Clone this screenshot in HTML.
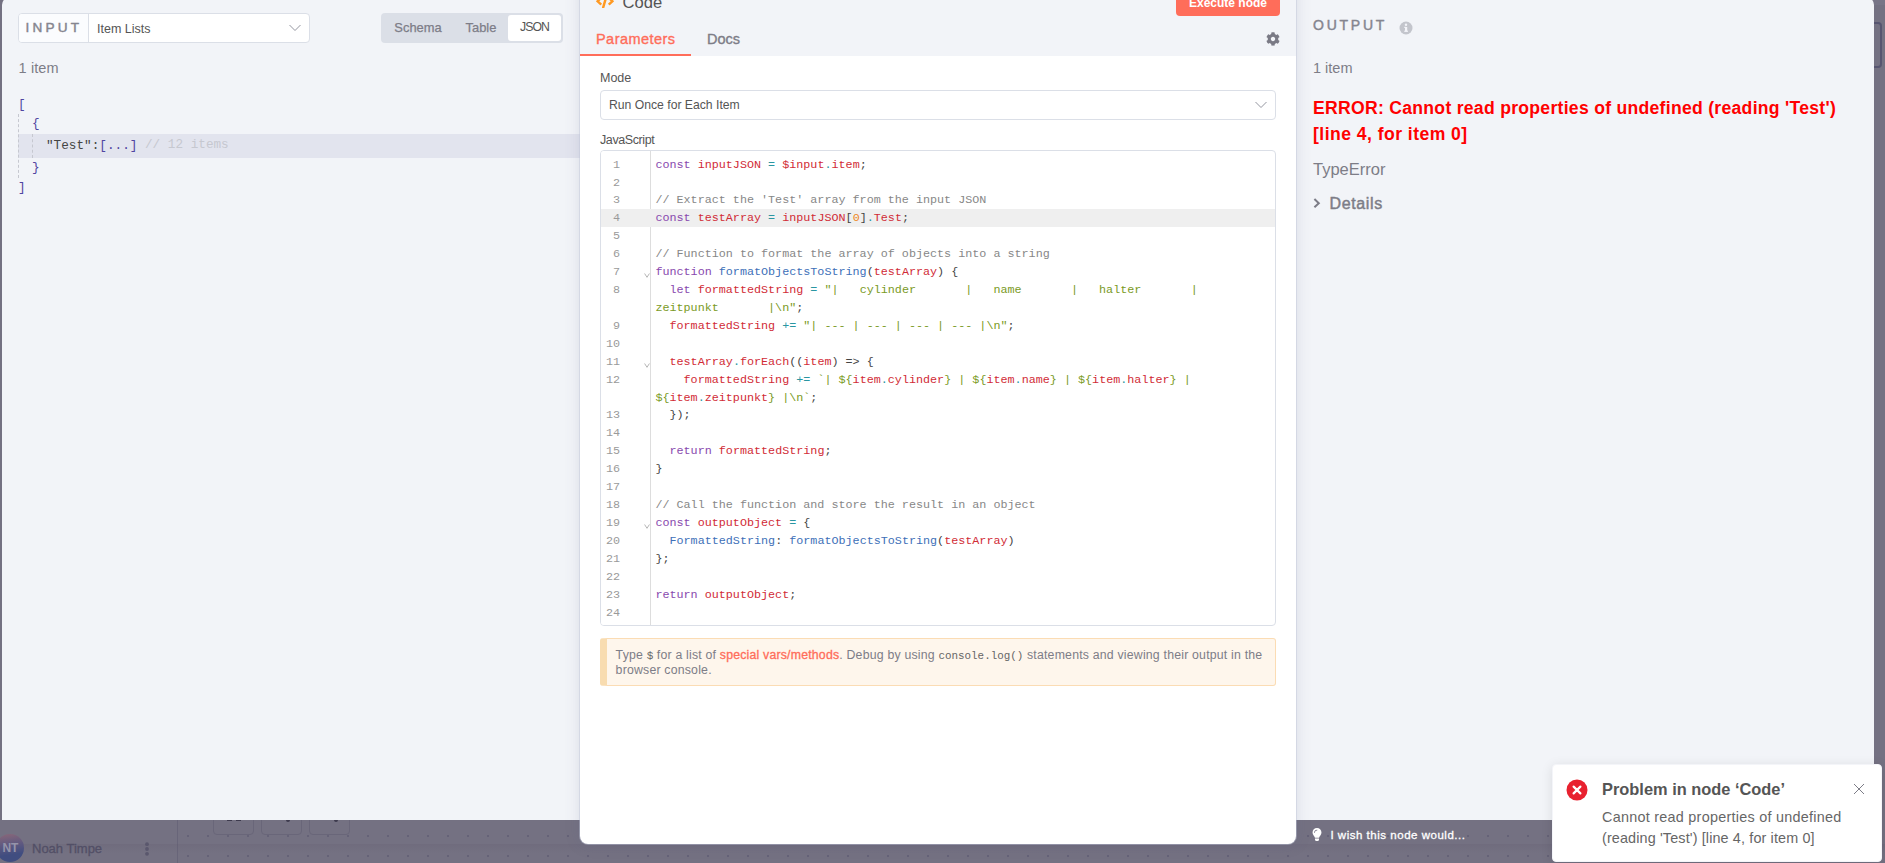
<!DOCTYPE html>
<html lang="en">
<head>
<meta charset="utf-8">
<title>n8n - Code node</title>
<style>
*{box-sizing:border-box;margin:0;padding:0}
html,body{width:1885px;height:863px;overflow:hidden}
body{position:relative;background:#747182;font-family:"Liberation Sans",sans-serif;color:#555;font-size:14px}
.abs{position:absolute}
/* canvas behind overlay */
#canvas{left:178px;top:0;width:1707px;height:863px;background-image:radial-gradient(circle,#656277 0,#656277 0.8px,rgba(101,98,119,0) 1.3px);background-size:20px 20px;background-position:0px 6px}
#sidebar{left:0;top:0;width:178px;height:863px;background:#747182;border-right:1px solid #686579}
#band{left:0;top:844px;width:1885px;height:9px;background:linear-gradient(rgba(90,80,100,.16),rgba(90,80,100,0))}
.zoombtn{top:790px;width:41px;height:44.5px;border:1px solid #696679;border-radius:4px}
/* panels */
#inpanel{left:2px;top:0;width:600px;height:820px}
#inpanel .bg{left:0;top:-3px;width:600px;height:823px;background:#f2f4f8;border-radius:8px 0 0 0}
#outpanel{left:1290px;top:0;width:584px;height:820px}
#outpanel .bg{left:0;top:-3px;width:584px;height:823px;background:#f2f4f8;border-radius:0 8px 0 0}
#main{left:580px;top:-20px;width:716px;height:864px;background:#fff;border-radius:8px;box-shadow:0 0 0 1px rgba(190,198,215,.45),0 0 16px rgba(80,90,130,.16)}
#mainhead{left:0;top:0;width:716px;height:76px;background:#f2f4f8;border-radius:8px 8px 0 0}

/* input panel */
.sel{left:16px;top:13px;width:292px;height:30px;border:1px solid #dbdfe7;border-radius:4px;background:#fff}
.sel .lbl{left:0;top:0;width:70px;height:28px;background:#fbfcfe;border-right:1px solid #dbdfe7;border-radius:3px 0 0 3px;font-weight:normal;-webkit-text-stroke:0.45px #85858f;font-size:13.6px;letter-spacing:3.2px;color:#85858f;line-height:28px;padding-left:6.5px}
.sel .val{left:78px;top:1.6px;height:28px;line-height:27px;font-size:12.5px;color:#555}
.seg{left:379px;top:13px;width:182px;height:30px;background:#dbdfe7;border-radius:4px}
.seg span{position:absolute;top:0;height:30px;line-height:29px;font-size:12.9px;color:#7d7d87;-webkit-text-stroke:0.25px #7d7d87;text-align:center}
.seg .on{top:2px;height:26px;line-height:25px;background:#fff;border-radius:3px;color:#555;-webkit-text-stroke:0;letter-spacing:-0.9px;padding-left:0;font-size:12.3px}
.cnt{font-size:14.5px;color:#7d7d87;line-height:16px}
.json{font-family:"Liberation Mono",monospace;font-size:12.7px;color:#5045a1;line-height:22px;white-space:pre}

/* main panel */
#main .title{left:42.5px;top:10.6px;font-size:16.6px;color:#555;line-height:24px}
.exec{left:596px;top:9.5px;width:104px;height:26px;background:#ff6d5a;border-radius:4px;color:#fff;font-weight:bold;font-size:12px;text-align:center;line-height:27.5px}
.tab{top:49px;height:27px;font-size:14.5px;line-height:20px;letter-spacing:0.25px}
.tab.on{letter-spacing:0.45px;color:#ff6d5a;-webkit-text-stroke:0.35px #ff6d5a;border-bottom:2px solid #ff6d5a}
.tab.off{letter-spacing:0;color:#7d7d87;-webkit-text-stroke:0.35px #7d7d87}
.plabel{font-size:12.5px;color:#555;line-height:14px}
.msel{left:20px;top:110px;width:676px;height:30px;border:1px solid #dbdfe7;border-radius:4px;background:#fff;font-size:12.2px;color:#555;line-height:28px;padding-left:8px}
.editor{left:20px;top:170px;width:676px;height:476px;border:1px solid #dbdfe7;border-radius:4px;background:#fff;overflow:hidden}
.gutter{left:0;top:0;width:50px;height:474px;border-right:1px solid #dddddd;background:#fff}
.ln{position:absolute;left:0;width:676px;height:18px;font-family:"Liberation Mono",monospace;font-size:11.74px;line-height:18px;white-space:pre;color:#444}
.ln i{position:absolute;left:5px;top:0;font-style:normal;color:#9a9a9a}
.ln b{position:absolute;left:54.4px;top:0;font-weight:normal}
.ln.act{background:#efefef}
.k{color:#8848ae}.v{color:#d12b36}.o{color:#2a96a2}.f{color:#4070b8}.s{color:#7a9a1e}.n{color:#ee8822}.c{color:#878787}
.fold{position:absolute;left:42.5px;width:6px;height:5px}
.notice{left:20px;top:658px;width:676px;height:48px;background:#fef6ec;border:1px solid #fbdcb4;border-left:7px solid #f8dcb0;border-radius:3px;font-size:12.3px;line-height:14.7px;color:#7d7d87;padding:9px 4px 0 8.6px;letter-spacing:0.2px}
.notice a{color:#ff6d5a;-webkit-text-stroke:0.3px #ff6d5a}
.notice code{font-family:"Liberation Mono",monospace;font-size:10.9px;color:#666;letter-spacing:0;line-height:10px}

/* output panel */
.otitle{left:23px;top:17px;font-size:14px;letter-spacing:2.75px;color:#85858f;-webkit-text-stroke:0.45px #85858f;line-height:16px}
.err{left:23px;top:96.2px;width:560px;font-size:17.6px;font-weight:bold;color:#ff0000;line-height:25.7px;letter-spacing:0.28px}
.terr{left:23px;top:159px;font-size:16.5px;color:#7d7d87;line-height:20px}
.det{left:39.6px;top:194.1px;font-size:16px;letter-spacing:0.62px;color:#7d7d87;-webkit-text-stroke:0.45px #7d7d87;line-height:20px}
/* toast */
#toast{left:1552px;top:764px;width:330px;height:98px;background:#fff;border-radius:4px;border:1px solid #f4f5f9;box-shadow:0 2px 12px rgba(0,0,0,.1)}
#toast .tt{left:49px;top:14px;font-size:16.4px;font-weight:bold;color:#555;line-height:20px}
#toast .tb{left:49px;top:41.6px;width:270px;font-size:14.4px;color:#666;line-height:20.9px;letter-spacing:0.26px}
/* bottom */
.wish{left:1330.4px;top:827.2px;letter-spacing:0.52px;font-size:11.5px;color:#fff;-webkit-text-stroke:0.3px #fff;line-height:16px}
.user{left:32px;top:841.2px;font-size:13px;color:#524f66;-webkit-text-stroke:0.3px #524f66;line-height:16px}
.avatar{left:-4px;top:834px;width:28px;height:28px;border-radius:50%;background:linear-gradient(172deg,#82657a 8%,#5f5980 40%,#404d80 72%);color:#9594aa;font-size:12px;font-weight:bold;line-height:28px;text-align:center;padding-left:0.6px;letter-spacing:-0.3px}
</style>
</head>
<body>
<div id="sidebar" class="abs"></div>
<div id="canvas" class="abs"></div>
<div id="band" class="abs"></div>
<div class="abs zoombtn" style="left:213px"></div>
<div class="abs zoombtn" style="left:261px"></div>
<div class="abs zoombtn" style="left:309px"></div>
<div class="abs" style="left:227px;top:819px;width:5px;height:2px;background:#3d3a4d"></div><div class="abs" style="left:236px;top:819px;width:5px;height:2px;background:#3d3a4d"></div><div class="abs" style="left:286px;top:819px;width:4px;height:2.500px;background:#3d3a4d;border-radius:0 0 2px 2px"></div><div class="abs" style="left:334px;top:819px;width:4px;height:2.500px;background:#3d3a4d;border-radius:0 0 2px 2px"></div>

<div id="inpanel" class="abs"><div class="abs bg"></div>
  <div class="abs sel">
    <div class="abs lbl">INPUT</div>
    <div class="abs val">Item Lists</div>
    <svg class="abs" style="left:269px;top:9px" width="14" height="10" viewBox="0 0 14 10"><path d="M1.5 2 L7 7.5 L12.5 2" fill="none" stroke="#9496a0" stroke-width="1"/></svg>
  </div>
  <div class="abs seg">
    <span style="left:3px;width:68px">Schema</span>
    <span style="left:73px;width:54px">Table</span>
    <span class="on" style="left:127px;width:53px">JSON</span>
  </div>
  <div class="abs cnt" style="left:16.6px;top:60px;letter-spacing:0.1px">1 item</div>
  <div class="abs" style="left:16px;top:134px;width:570px;height:24px;background:#e2e4ee"></div>
  <div class="abs" style="left:16px;top:114px;width:0;height:64px;border-left:1px dashed #c6c8d0"></div>
  <div class="abs" style="left:30px;top:134px;width:0;height:24px;border-left:1px dashed #c6c8d0"></div>
  <div class="abs json" style="left:16px;top:93.6px">[</div>
  <div class="abs json" style="left:30px;top:113.4px">{</div>
  <div class="abs json" style="left:44px;top:135.4px"><span style="color:#444">"Test":</span>[...] <span style="color:#c6c8d0;position:relative;top:-1px">// 12 items</span></div>
  <div class="abs json" style="left:30px;top:157.2px">}</div>
  <div class="abs json" style="left:16px;top:177px">]</div>
</div>
<div class="abs" style="left:1866px;top:0;width:19px;height:5px;background:#787587"></div>
<div class="abs" style="left:1870px;top:21.500px;width:12px;height:46.500px;border:2px solid #575570;border-left:none;border-radius:0 4px 4px 0"></div>
<div id="outpanel" class="abs"><div class="abs bg"></div>
  <div class="abs otitle">OUTPUT</div>
  <svg class="abs" style="left:109px;top:21px" width="14" height="14" viewBox="0 0 14 14"><circle cx="7" cy="7" r="6.5" fill="#c3c5cc"/><rect x="6" y="6" width="2.2" height="4.600" fill="#f3f4f9"/><rect x="5.200" y="9.700" width="3.800" height="1.100" fill="#f3f4f9"/><rect x="5.200" y="5.800" width="2" height="1.100" fill="#f3f4f9"/><circle cx="7" cy="3.700" r="1.200" fill="#f3f4f9"/></svg>
  <div class="abs cnt" style="left:23px;top:60px">1 item</div>
  <div class="abs err">ERROR: Cannot read properties of undefined (reading 'Test')<br><span style="letter-spacing:0.45px">[line 4, for item 0]</span></div>
  <div class="abs terr">TypeError</div>
  <svg class="abs" style="left:23px;top:198px" width="8" height="10.400" viewBox="0 0 8 10.400"><path d="M1.400 1.100 L5.800 5.200 L1.400 9.300" fill="none" stroke="#7d7d87" stroke-width="2"/></svg>
  <div class="abs det">Details</div>
</div>
<div id="main" class="abs">
  <div id="mainhead" class="abs"></div>
  <svg class="abs" style="left:16px;top:14.100px" width="18" height="14.400" viewBox="0 0 640 512"><path fill="#ff9922" d="M278.9 511.5l-61-17.7c-6.4-1.8-10-8.500-8.200-14.900L346.200 8.700c1.800-6.400 8.500-10 14.900-8.200l61 17.700c6.400 1.800 10 8.500 8.200 14.900L293.800 503.300c-1.900 6.400-8.500 10.100-14.900 8.200zm-114-112.200l43.500-46.400c4.600-4.900 4.300-12.700-.8-17.200L117 256l90.600-79.700c5.100-4.500 5.500-12.300.8-17.200l-43.500-46.400c-4.500-4.800-12.100-5.100-17-.5L3.800 247.200c-5.100 4.700-5.100 12.800 0 17.500l144.100 135.100c4.900 4.600 12.500 4.400 17-.5zm327.200.600l144.100-135.100c5.100-4.700 5.100-12.800 0-17.500L492.100 112.100c-4.800-4.500-12.400-4.300-17 .5L431.600 159c-4.600 4.900-4.300 12.700.8 17.200L523 256l-90.600 79.700c-5.100 4.500-5.500 12.300-.8 17.200l43.500 46.400c4.500 4.900 12.100 5.100 17 .6z"/></svg>
  <div class="abs title">Code</div>
  <div class="abs exec">Execute node</div>
  <div class="abs tab on" style="left:0;width:111px;padding-left:16px">Parameters</div>
  <div class="abs tab off" style="left:127px">Docs</div>
  <svg class="abs" style="left:686px;top:52px" width="14" height="14" viewBox="0 0 512 512"><path fill="#7a7a85" d="M487.400 315.700l-42.600-24.600c4.300-23.200 4.300-47 0-70.200l42.600-24.600c4.900-2.800 7.100-8.600 5.500-14-11.100-35.600-30-67.800-54.700-94.600-3.800-4.100-10-5.100-14.800-2.300L380.800 110c-17.900-15.400-38.500-27.300-60.800-35.100V25.800c0-5.600-3.900-10.500-9.400-11.700-36.700-8.200-74.300-7.800-109.200 0-5.500 1.200-9.400 6.100-9.400 11.700V75c-22.200 7.900-42.800 19.800-60.800 35.100L88.700 85.500c-4.900-2.800-11-1.900-14.800 2.300-24.700 26.700-43.600 58.900-54.700 94.600-1.700 5.400.6 11.200 5.500 14L67.300 221c-4.300 23.200-4.300 47 0 70.200l-42.600 24.600c-4.900 2.800-7.100 8.600-5.500 14 11.100 35.600 30 67.800 54.700 94.600 3.800 4.100 10 5.100 14.800 2.300l42.600-24.600c17.900 15.400 38.500 27.300 60.800 35.100v49.200c0 5.600 3.900 10.500 9.400 11.700 36.700 8.200 74.300 7.800 109.200 0 5.500-1.200 9.400-6.100 9.400-11.700v-49.200c22.200-7.900 42.800-19.800 60.800-35.100l42.600 24.600c4.900 2.800 11 1.900 14.800-2.300 24.700-26.700 43.600-58.900 54.700-94.600 1.500-5.500-.7-11.300-5.600-14.100zM256 336c-44.100 0-80-35.900-80-80s35.900-80 80-80 80 35.900 80 80-35.900 80-80 80z"/></svg>
  <div class="abs plabel" style="left:20px;top:91px">Mode</div>
  <div class="abs msel">Run Once for Each Item
    <svg class="abs" style="left:653px;top:9px" width="14" height="10" viewBox="0 0 14 10"><path d="M1.500 2 L7 7.500 L12.500 2" fill="none" stroke="#9496a0" stroke-width="1"/></svg>
  </div>
  <div class="abs plabel" style="left:20px;top:153px;letter-spacing:-0.4px">JavaScript</div>
  <div class="abs editor">
    <div class="abs gutter"></div>
      <div class="ln" style="top:4.60px"><i> 1</i><b><span class="k">const</span> <span class="v">inputJSON</span> <span class="o">=</span> <span class="v">$input</span><span class="o">.</span><span class="v">item</span>;</b></div>
      <div class="ln" style="top:22.52px"><i> 2</i><b></b></div>
      <div class="ln" style="top:40.44px"><i> 3</i><b><span class="c">// Extract the 'Test' array from the input JSON</span></b></div>
      <div class="ln act" style="top:58.36px"><i> 4</i><b><span class="k">const</span> <span class="v">testArray</span> <span class="o">=</span> <span class="v">inputJSON</span>[<span class="n">0</span>]<span class="o">.</span><span class="v">Test</span>;</b></div>
      <div class="ln" style="top:76.28px"><i> 5</i><b></b></div>
      <div class="ln" style="top:94.20px"><i> 6</i><b><span class="c">// Function to format the array of objects into a string</span></b></div>
      <div class="ln" style="top:112.12px"><i> 7</i><svg class="fold" style="top:10px" viewBox="0 0 6 5"><path d="M0.600 0.500 L3 4.300 L5.400 0.500" fill="none" stroke="#a5a5a5" stroke-width="0.800"/></svg><b><span class="k">function</span> <span class="f">formatObjectsToString</span>(<span class="v">testArray</span>) {</b></div>
      <div class="ln" style="top:130.04px"><i> 8</i><b>  <span class="k">let</span> <span class="v">formattedString</span> <span class="o">=</span> <span class="s">"|   cylinder       |   name       |   halter       |</span></b></div>
      <div class="ln" style="top:147.96px"><b><span class="s">zeitpunkt       |\n"</span>;</b></div>
      <div class="ln" style="top:165.88px"><i> 9</i><b>  <span class="v">formattedString</span> <span class="o">+=</span> <span class="s">"| --- | --- | --- | --- |\n"</span>;</b></div>
      <div class="ln" style="top:183.80px"><i>10</i><b></b></div>
      <div class="ln" style="top:201.72px"><i>11</i><svg class="fold" style="top:10px" viewBox="0 0 6 5"><path d="M0.600 0.500 L3 4.300 L5.400 0.500" fill="none" stroke="#a5a5a5" stroke-width="0.800"/></svg><b>  <span class="v">testArray</span><span class="o">.</span><span class="v">forEach</span>((<span class="v">item</span>) =&gt; {</b></div>
      <div class="ln" style="top:219.64px"><i>12</i><b>    <span class="v">formattedString</span> <span class="o">+=</span> <span class="s">`| ${</span><span class="v">item</span><span class="o">.</span><span class="v">cylinder</span><span class="s">} | ${</span><span class="v">item</span><span class="o">.</span><span class="v">name</span><span class="s">} | ${</span><span class="v">item</span><span class="o">.</span><span class="v">halter</span><span class="s">} |</span></b></div>
      <div class="ln" style="top:237.56px"><b><span class="s">${</span><span class="v">item</span><span class="o">.</span><span class="v">zeitpunkt</span><span class="s">} |\n`</span>;</b></div>
      <div class="ln" style="top:255.48px"><i>13</i><b>  });</b></div>
      <div class="ln" style="top:273.40px"><i>14</i><b></b></div>
      <div class="ln" style="top:291.32px"><i>15</i><b>  <span class="k">return</span> <span class="v">formattedString</span>;</b></div>
      <div class="ln" style="top:309.24px"><i>16</i><b>}</b></div>
      <div class="ln" style="top:327.16px"><i>17</i><b></b></div>
      <div class="ln" style="top:345.08px"><i>18</i><b><span class="c">// Call the function and store the result in an object</span></b></div>
      <div class="ln" style="top:363.00px"><i>19</i><svg class="fold" style="top:10px" viewBox="0 0 6 5"><path d="M0.600 0.500 L3 4.300 L5.400 0.500" fill="none" stroke="#a5a5a5" stroke-width="0.800"/></svg><b><span class="k">const</span> <span class="v">outputObject</span> <span class="o">=</span> {</b></div>
      <div class="ln" style="top:380.92px"><i>20</i><b>  <span class="f">FormattedString</span>: <span class="f">formatObjectsToString</span>(<span class="v">testArray</span>)</b></div>
      <div class="ln" style="top:398.84px"><i>21</i><b>};</b></div>
      <div class="ln" style="top:416.76px"><i>22</i><b></b></div>
      <div class="ln" style="top:434.68px"><i>23</i><b><span class="k">return</span> <span class="v">outputObject</span>;</b></div>
      <div class="ln" style="top:452.60px"><i>24</i><b></b></div>
  </div>
  <div class="abs notice">Type <code>$</code> for a list of <a>special vars/methods</a>. Debug by using <code>console.log()</code> statements and viewing their output in the browser console.</div>
</div>
<svg class="abs" style="left:1312px;top:828px" width="10" height="13" viewBox="0 0 352 512"><path fill="#fff" d="M96.060 454.350c.01 6.290 1.870 12.450 5.360 17.690l17.090 25.690a31.990 31.990 0 0 0 26.640 14.280h61.710a31.990 31.990 0 0 0 26.640-14.280l17.090-25.690a31.989 31.989 0 0 0 5.360-17.690l.04-38.350H96.010l.05 38.350zM0 176c0 44.370 16.450 84.850 43.560 115.780 16.520 18.850 42.360 58.230 52.210 91.450.04.260.07.520.11.780h160.240c.04-.26.070-.51.110-.780 9.850-33.220 35.690-72.600 52.210-91.450C335.550 260.850 352 220.370 352 176 352 78.610 272.910-.300 175.450 0 73.440.310 0 82.970 0 176zm176-80c-44.110 0-80 35.890-80 80 0 8.840-7.160 16-16 16s-16-7.160-16-16c0-61.760 50.240-112 112-112 8.840 0 16 7.160 16 16s-7.160 16-16 16z"/></svg>
<div class="abs wish">I wish this node would...</div>
<div class="abs avatar">NT</div>
<div class="abs user">Noah Timpe</div>
<svg class="abs" style="left:144px;top:840px" width="6" height="18" viewBox="0 0 6 18"><circle cx="3" cy="4.200" r="1.900" fill="#5a576d"/><circle cx="3" cy="9" r="1.900" fill="#5a576d"/><circle cx="3" cy="13.800" r="1.900" fill="#5a576d"/></svg>


<div id="toast" class="abs">
  <svg class="abs" style="left:13px;top:14px" width="22" height="22" viewBox="0 0 22 22"><circle cx="11" cy="11" r="10.500" fill="#e8212f"/><path d="M7.600 7.600 L14.400 14.400 M14.400 7.600 L7.600 14.400" stroke="#fff" stroke-width="2.200" stroke-linecap="round"/></svg>
  <div class="abs tt">Problem in node &#8216;Code&#8217;</div>
  <div class="abs tb">Cannot read properties of undefined<br><span style="letter-spacing:0.13px">(reading 'Test') [line 4, for item 0]</span></div>
  <svg class="abs" style="left:300px;top:18px" width="12" height="12" viewBox="0 0 12 12"><path d="M1 1 L11 11 M11 1 L1 11" stroke="#7d7d87" stroke-width="1"/></svg>
</div>
</body>
</html>
